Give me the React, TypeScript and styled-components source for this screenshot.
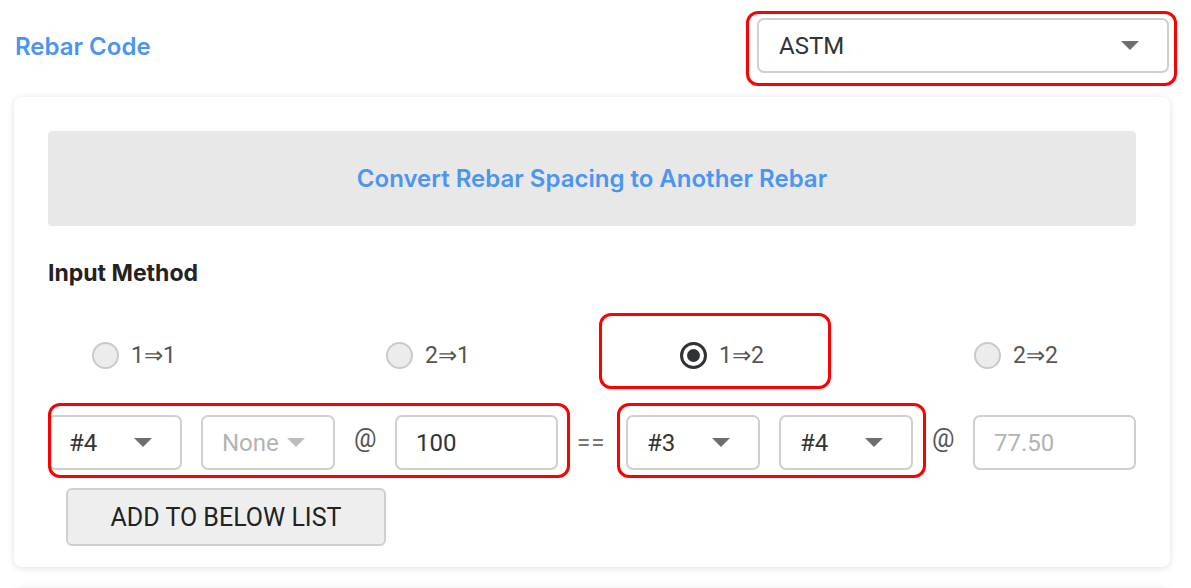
import React from "react";
import styled, { createGlobalStyle, css } from "styled-components";

const GlobalStyle = createGlobalStyle`
  body {
    margin: 0;
    background: #ffffff;
    font-family: Roboto, "Liberation Sans", sans-serif;
    color: #333333;
  }
`;

type Mark = { top: number; right: number; bottom: number; left: number; radius?: number };

// red annotation frame drawn over the content it surrounds
const marked = css<{ $mark?: Mark }>`
  position: relative;
  ${({ $mark }) =>
    $mark &&
    css`
      &::after {
        content: "";
        position: absolute;
        top: ${-$mark.top}px;
        right: ${-$mark.right}px;
        bottom: ${-$mark.bottom}px;
        left: ${-$mark.left}px;
        border: 3px solid #ff0000;
        border-radius: ${$mark.radius ?? 12}px;
        pointer-events: none;
      }
    `}
`;

const Caret = ({ light }: { light?: boolean }) => (
  <svg width="18" height="9" viewBox="0 0 18 9">
    <polygon points="0,0 18,0 9,9" fill={light ? "#bdbdbd" : "#6e6e6e"} />
  </svg>
);

const App = () => {
  const options = [
    { label: "1⇒1", checked: false },
    { label: "2⇒1", checked: false },
    { label: "1⇒2", checked: true },
    { label: "2⇒2", checked: false },
  ];

  return (
    <>
      <GlobalStyle />
      <Page>
        <Header>
          <Title>Rebar Code</Title>
          <CodeSelect $mark={{ top: 9, right: 10, bottom: 15, left: 13 }}>
            <span>ASTM</span>
            <Caret />
          </CodeSelect>
        </Header>

        <Card>
          <Banner>Convert Rebar Spacing to Another Rebar</Banner>
          <SectionLabel>Input Method</SectionLabel>

          <RadioRow>
            {options.map((o) => (
              <RadioOption
                key={o.label}
                $mark={o.checked ? { top: 28, right: 67, bottom: 20, left: 81 } : undefined}
              >
                <RadioCircle $checked={o.checked} />
                <RadioLabel>{o.label}</RadioLabel>
              </RadioOption>
            ))}
          </RadioRow>

          <InputRow>
            <Group $mark={{ top: 12, right: 12, bottom: 8, left: 0 }}>
              <SmallSelect>
                <span>#4</span>
                <Caret />
              </SmallSelect>
              <SmallSelect $muted>
                <span>None</span>
                <Caret light />
              </SmallSelect>
              <At>@</At>
              <TextBox $width={163}>100</TextBox>
            </Group>
            <Equals>==</Equals>
            <Group $mark={{ top: 12, right: 13, bottom: 8, left: 9 }}>
              <SmallSelect>
                <span>#3</span>
                <Caret />
              </SmallSelect>
              <SmallSelect>
                <span>#4</span>
                <Caret />
              </SmallSelect>
            </Group>
            <At>@</At>
            <TextBox $muted $grow>
              77.50
            </TextBox>
          </InputRow>

          <AddButton>ADD TO BELOW LIST</AddButton>
        </Card>

        <NextCard />
      </Page>
    </>
  );
};

export default App;

const Page = styled.div`
  height: 588px;
  overflow: hidden;
  padding: 0 21px 0 14px;
`;

const Header = styled.div`
  display: flex;
  justify-content: space-between;
  align-items: center;
  height: 97px;
  padding: 0 1px 0 1px;
  box-sizing: border-box;
`;

const Title = styled.h2`
  margin: 0 0 4px;
  font-family: Inter, "Noto Sans", sans-serif;
  font-size: 24px;
  font-weight: 600;
  color: #4b95f0;
`;

const selectBase = css`
  display: flex;
  align-items: center;
  justify-content: space-between;
  box-sizing: border-box;
  background: #ffffff;
  border: 2px solid #cfcfcf;
  border-radius: 7px;
  font-size: 24px;
  color: #333333;
`;

const CodeSelect = styled.div<{ $mark?: Mark }>`
  ${selectBase};
  ${marked};
  width: 412px;
  height: 55px;
  margin-bottom: 6px;
  padding: 0 28px 0 20px;
`;

const Card = styled.div`
  background: #ffffff;
  border-radius: 8px;
  box-shadow: 0 1px 7px rgba(0, 0, 0, 0.13);
  padding: 34px 34px 21px;
`;

const Banner = styled.div`
  display: flex;
  align-items: center;
  justify-content: center;
  height: 95px;
  background: #e8e8e8;
  border-radius: 4px;
  font-family: Inter, "Noto Sans", sans-serif;
  font-size: 24px;
  font-weight: 600;
  color: #4b95f0;
`;

const SectionLabel = styled.div`
  margin-top: 35px;
  font-family: Inter, "Noto Sans", sans-serif;
  font-size: 23px;
  font-weight: 700;
  line-height: 24px;
  color: #222222;
`;

const RadioRow = styled.div`
  display: grid;
  grid-template-columns: repeat(4, 294px);
  margin: 50px 0 0 44px;
  height: 40px;
  align-items: center;
`;

const RadioOption = styled.div<{ $mark?: Mark }>`
  ${marked};
  display: flex;
  align-items: center;
  justify-self: start;
  gap: 12px;
  height: 28px;
`;

const RadioCircle = styled.span<{ $checked?: boolean }>`
  display: inline-flex;
  align-items: center;
  justify-content: center;
  box-sizing: border-box;
  width: 27px;
  height: 27px;
  border-radius: 50%;
  ${({ $checked }) =>
    $checked
      ? css`
          border: 3px solid #2f3337;
          background: #ffffff;
          &::before {
            content: "";
            width: 13px;
            height: 13px;
            border-radius: 50%;
            background: #2f3337;
          }
        `
      : css`
          border: 2px solid #c9c9c9;
          background: #ececec;
        `}
`;

const RadioLabel = styled.span`
  font-size: 23px;
  color: #555555;
`;

const InputRow = styled.div`
  display: flex;
  align-items: center;
  gap: 19px;
  margin-top: 40px;
`;

const Group = styled.div<{ $mark?: Mark }>`
  ${marked};
  display: flex;
  align-items: center;
  gap: 19px;
`;

const SmallSelect = styled.div<{ $muted?: boolean }>`
  ${selectBase};
  width: 134px;
  height: 55px;
  padding: 0 28px 0 19px;
  color: ${({ $muted }) => ($muted ? "#b3b3b3" : "#333333")};
`;

const TextBox = styled.div<{ $width?: number; $muted?: boolean; $grow?: boolean }>`
  ${selectBase};
  justify-content: flex-start;
  width: ${({ $width }) => ($width ? `${$width}px` : "auto")};
  flex: ${({ $grow }) => ($grow ? 1 : "none")};
  height: 55px;
  padding: 0 19px;
  color: ${({ $muted }) => ($muted ? "#b3b3b3" : "#333333")};
`;

const At = styled.span`
  width: 22px;
  font-size: 25px;
  color: #555555;
  margin-top: -8px;
`;

const Equals = styled.span`
  width: 30px;
  font-size: 24px;
  color: #777777;
  letter-spacing: 1px;
`;

const AddButton = styled.button`
  display: block;
  margin: 18px 0 0 18px;
  width: 320px;
  height: 58px;
  background: #eeeeee;
  border: 2px solid #cfcfcf;
  border-radius: 6px;
  font-family: Roboto, "Liberation Sans", sans-serif;
  font-size: 25px;
  color: #222222;
`;

const NextCard = styled.div`
  margin-top: 21px;
  height: 40px;
  background: #ffffff;
  border-radius: 8px;
  box-shadow: 0 1px 7px rgba(0, 0, 0, 0.13);
`;
